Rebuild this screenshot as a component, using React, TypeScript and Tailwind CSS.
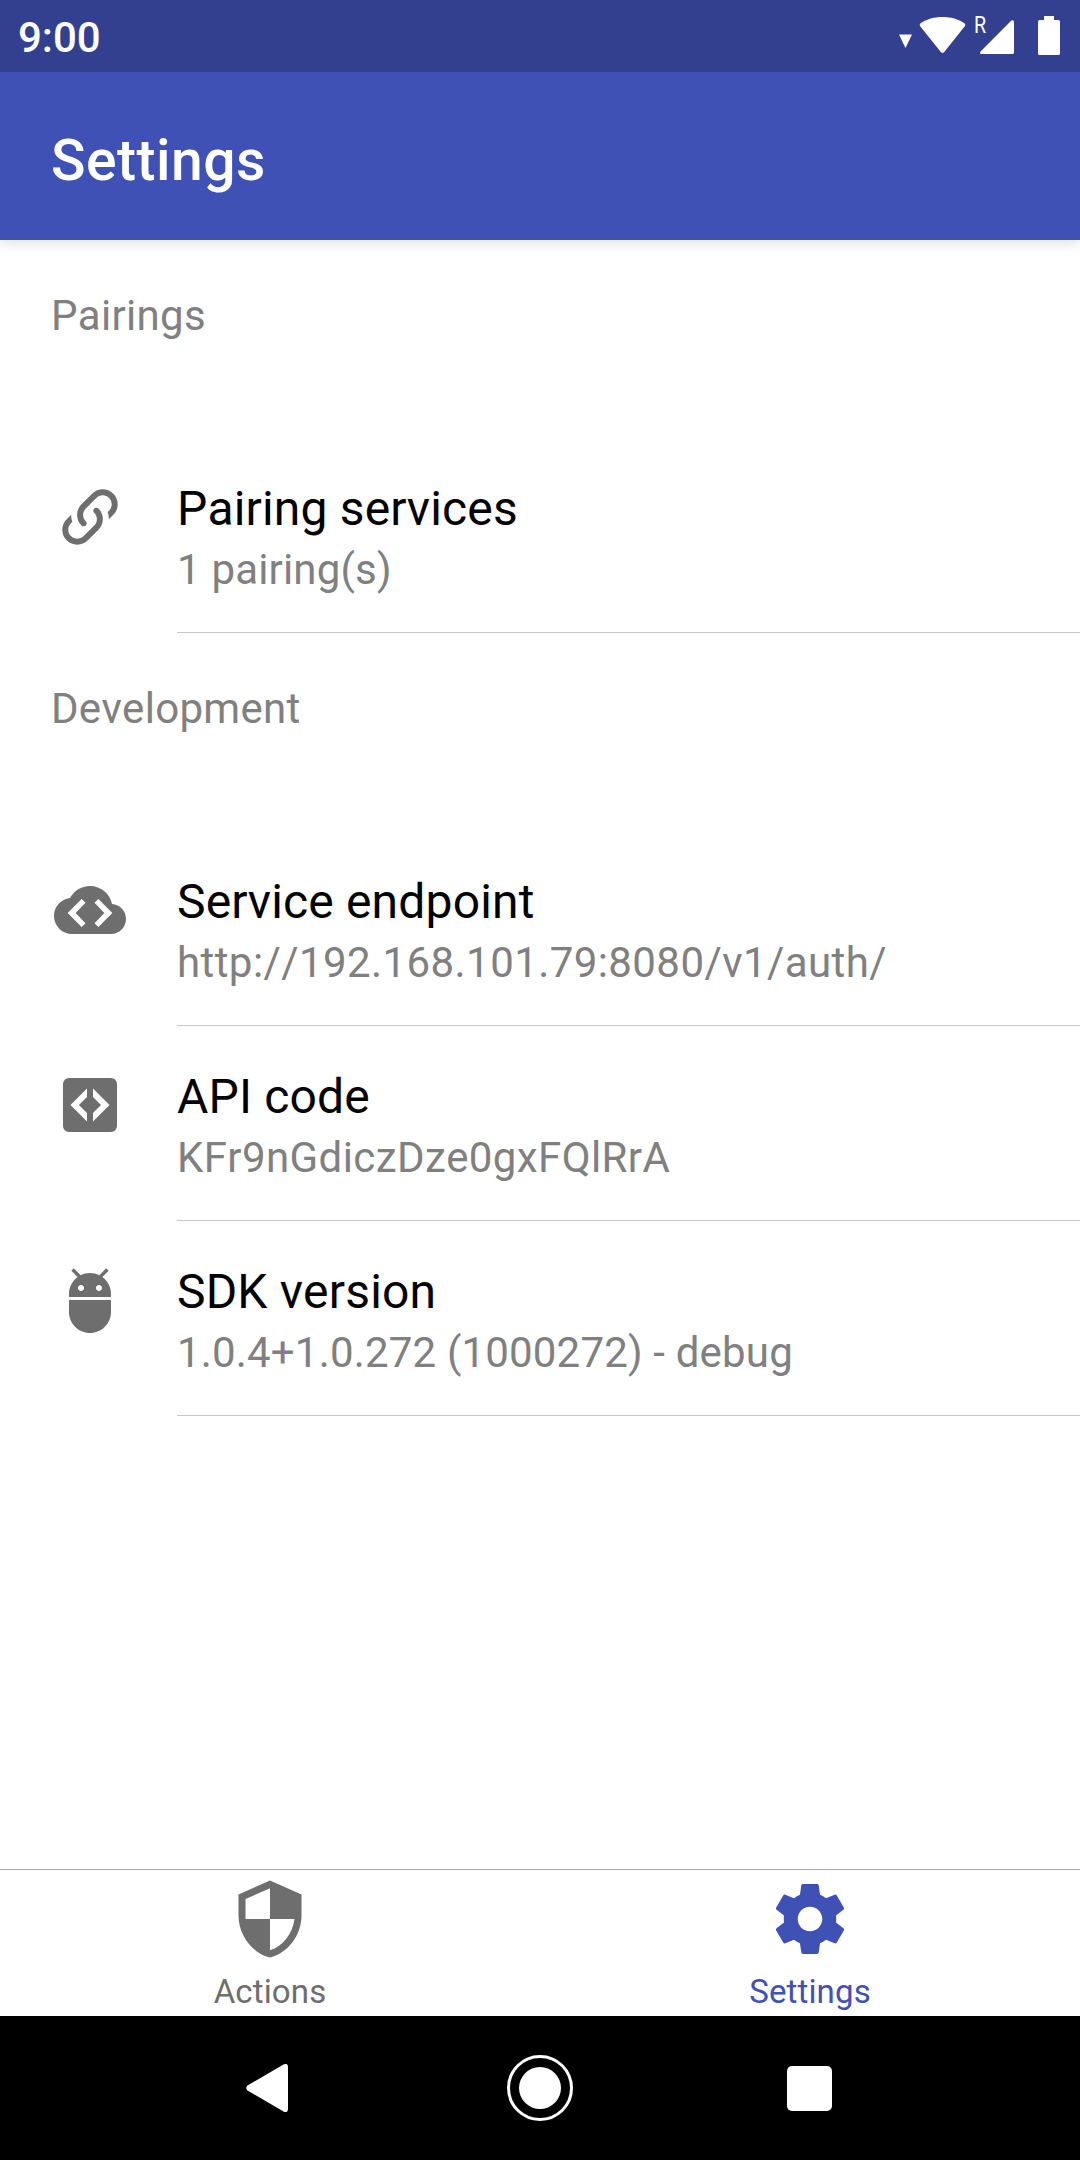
import type { ReactNode } from "react";

const LINK =
  "M10.59,13.41C11,13.8 11,14.44 10.59,14.83C10.2,15.22 9.56,15.22 9.17,14.83C7.22,12.88 7.22,9.71 9.17,7.76V7.76L12.71,4.22C14.66,2.27 17.83,2.27 19.78,4.22C21.73,6.17 21.73,9.34 19.78,11.29L18.29,12.78C18.3,11.96 18.17,11.14 17.89,10.36L18.36,9.88C19.54,8.71 19.54,6.81 18.36,5.64C17.19,4.46 15.29,4.46 14.12,5.64L10.59,9.17C9.41,10.34 9.41,12.24 10.59,13.41M13.41,9.17C13.8,8.78 14.44,8.78 14.83,9.17C16.78,11.12 16.78,14.29 14.83,16.24V16.24L11.29,19.78C9.34,21.73 6.17,21.73 4.22,19.78C2.27,17.83 2.27,14.66 4.22,12.71L5.71,11.22C5.7,12.04 5.83,12.86 6.11,13.65L5.64,14.12C4.46,15.29 4.46,17.19 5.64,18.36C6.81,19.54 8.71,19.54 9.88,18.36L13.41,14.83C14.59,13.66 14.59,11.76 13.41,10.59C13,10.2 13,9.56 13.41,9.17Z";
const CLOUD =
  "M19.35 10.04C18.67 6.59 15.64 4 12 4 9.11 4 6.6 5.64 5.35 8.04 2.34 8.36 0 10.91 0 14c0 3.31 2.69 6 6 6h13c2.76 0 5-2.24 5-5 0-2.64-2.05-4.78-4.65-4.96zM9.2 8.3L4.55 13l4.65 4.7 1.3-1.3L7.2 13l3.3-3.4zM14.8 8.3l-1.3 1.3L16.8 13l-3.3 3.4 1.3 1.3L19.45 13z";
const CODE_BOX =
  "M5 3h14a2 2 0 0 1 2 2v14a2 2 0 0 1-2 2H5a2 2 0 0 1-2-2V5a2 2 0 0 1 2-2zM11 6.5L5.5 12l5.5 5.5v-2.83L8.33 12 11 9.33zM13 6.5v2.83L15.67 12 13 14.67v2.83l5.5-5.5z";
const ANDROID =
  "M5 16c0 3.87 3.13 7 7 7s7-3.13 7-7v-4H5v4zM16.12 4.37l2.1-2.1-.82-.83-2.3 2.31C14.16 3.28 13.12 3 12 3s-2.16.28-3.09.75L6.6 1.44l-.82.83 2.1 2.1C6.14 5.64 5 7.68 5 10v1h14v-1c0-2.32-1.14-4.36-2.88-5.63zM9 9c-.55 0-1-.45-1-1s.45-1 1-1 1 .45 1 1-.45 1-1 1zm6 0c-.55 0-1-.45-1-1s.45-1 1-1 1 .45 1 1-.45 1-1 1z";
const SHIELD =
  "M12 1L3 5v6c0 5.55 3.84 10.74 9 12 5.16-1.26 9-6.45 9-12V5l-9-4zm0 10.99h7c-.53 4.12-3.28 7.79-7 8.94V12H5V6.3l7-3.11v8.8z";
const GEAR =
  "M19.43 12.98c.04-.32.07-.64.07-.98s-.03-.66-.07-.98l2.11-1.65c.19-.15.24-.42.12-.64l-2-3.46c-.12-.22-.39-.3-.61-.22l-2.49 1c-.52-.4-1.08-.73-1.69-.98l-.38-2.65C14.46 2.18 14.25 2 14 2h-4c-.25 0-.46.18-.49.42l-.38 2.65c-.61.25-1.17.59-1.69.98l-2.49-1c-.23-.09-.49 0-.61.22l-2 3.46c-.13.22-.07.49.12.64l2.11 1.65c-.04.32-.07.65-.07.98s.03.66.07.98l-2.11 1.65c-.19.15-.24.42-.12.64l2 3.46c.12.22.39.3.61.22l2.49-1c.52.4 1.08.73 1.69.98l.38 2.65c.03.24.24.42.49.42h4c.25 0 .46-.18.49-.42l.38-2.65c.61-.25 1.17-.59 1.69-.98l2.49 1c.23.09.49 0 .61-.22l2-3.46c.12-.22.07-.49-.12-.64l-2.11-1.65zM12 15.5c-1.93 0-3.5-1.57-3.5-3.5s1.57-3.5 3.5-3.5 3.5 1.57 3.5 3.5-1.57 3.5-3.5 3.5z";

function Icon({ d, className }: { d: string; className: string }) {
  return (
    <svg viewBox="0 0 24 24" fill="currentColor" fillRule="evenodd" className={className}>
      <path d={d} />
    </svg>
  );
}

function StatusBar() {
  return (
    <div className="relative z-10 flex h-[72px] shrink-0 items-start justify-between bg-[#334090] pr-5 pl-[18px] text-white">
      <span className="pt-0.5 text-[42px] leading-[72px] font-medium">9:00</span>
      <div className="flex h-full items-start">
        <svg className="mt-[34px] h-[14px] w-[13px]" viewBox="0 0 13 14" fill="currentColor">
          <path d="M0 .5h13L6.5 14z" />
        </svg>
        <svg className="mt-[17px] ml-[7px] h-9 w-[47px]" viewBox="0 0 47 36" fill="currentColor">
          <path d="M1.6 6.2C7.800 2 15 0 23.500 0S39.200 2 45.400 6.200Q47 7.600 45.800 9.200L25 35.200Q23.500 36.600 22 35.200L1.200 9.200Q0 7.600 1.600 6.200z" />
        </svg>
        <div className="relative mt-5 ml-[14px] h-[34px] w-[34px]">
          <svg className="h-full w-full" viewBox="0 0 34 34" fill="currentColor">
            <path d="M31.400.6Q34-.8 34 2v30.500Q34 34 32.500 34H1.500Q-.8 34 .6 31.600z" />
          </svg>
          <span className="absolute -top-[7px] -left-[6px] origin-left scale-x-[.82] text-[24px] leading-[24px]">R</span>
        </div>
        <svg className="mt-4 ml-6 h-[39px] w-[22px]" viewBox="0 0 22 39" fill="currentColor">
          <path d="M6 0h10v4h4.500Q22 4 22 5.500v32Q22 39 20.500 39h-19Q0 39 0 37.500v-32Q0 4 1.500 4H6z" />
        </svg>
      </div>
    </div>
  );
}

function SectionHeader({ children }: { children: ReactNode }) {
  return (
    <h2 className="h-[198px] pt-[51px] pl-[51px] text-[42px] leading-[49px] tracking-[0.3px] text-[#808080]">
      {children}
    </h2>
  );
}

type RowProps = { icon: string; title: string; detail: string; detailTracking?: string };

function Row({ icon, title, detail, detailTracking = "tracking-[0.18px]" }: RowProps) {
  return (
    <div className="flex h-[195px] pl-[54px]">
      <Icon d={icon} className="mt-[43px] mr-[51px] size-[72px] shrink-0 text-[#6e6e6e]" />
      <div className="flex flex-1 flex-col border-b border-[#c8c8c8] pt-[43px]">
        <span className="text-[48px] leading-[56px] tracking-[0.17px] text-black">{title}</span>
        <span className={`mt-2 text-[42px] leading-[49px] text-[#808080] ${detailTracking}`}>{detail}</span>
      </div>
    </div>
  );
}

function Tab({ icon, label, color }: { icon: string; label: string; color: string }) {
  return (
    <div className={`flex flex-1 flex-col items-center pt-[7px] ${color}`}>
      <Icon d={icon} className="size-[84px]" />
      <span className="mt-[11px] text-[33px] leading-[39px] tracking-[0.15px]">{label}</span>
    </div>
  );
}

function SystemNav() {
  return (
    <div className="flex h-36 shrink-0 items-center justify-between bg-black pr-[248px] pl-[246px] text-white">
      <svg className="h-12 w-[42px]" viewBox="0 0 42 48" fill="currentColor">
        <path d="M37.500.6Q42-1.500 42 3v42q0 4.500-4.500 2.400L1.500 26.500Q-1 24 1.500 21.500z" />
      </svg>
      <div className="ml-1 flex size-[66px] items-center justify-center rounded-full border-3 border-white">
        <div className="size-[42px] rounded-full bg-white" />
      </div>
      <div className="size-[45px] rounded-[5px] bg-white" />
    </div>
  );
}

export default function App() {
  return (
    <div className="flex h-[2160px] w-[1080px] flex-col overflow-hidden bg-white font-[Roboto,sans-serif] [font-kerning:none]">
      <StatusBar />
      <header className="flex h-[168px] shrink-0 items-center bg-[#3f51b5] pt-[9px] pl-[51px] shadow-[0_3px_12px_rgba(0,0,0,0.13)]">
        <h1 className="text-[57px] leading-[70px] font-medium tracking-[0.5px] text-white">Settings</h1>
      </header>
      <main className="flex-1">
        <SectionHeader>Pairings</SectionHeader>
        <Row icon={LINK} title="Pairing services" detail="1 pairing(s)" />
        <SectionHeader>Development</SectionHeader>
        <Row
          icon={CLOUD}
          title="Service endpoint"
          detail="http://192.168.101.79:8080/v1/auth/"
          detailTracking="tracking-[0.42px]"
        />
        <Row icon={CODE_BOX} title="API code" detail="KFr9nGdiczDze0gxFQlRrA" detailTracking="tracking-[0.4px]" />
        <Row icon={ANDROID} title="SDK version" detail="1.0.4+1.0.272 (1000272) - debug" />
      </main>
      <nav className="flex h-[147px] shrink-0 border-t border-[#a7a7aa]">
        <Tab icon={SHIELD} label="Actions" color="text-[#6e6e6e]" />
        <Tab icon={GEAR} label="Settings" color="text-[#3f51b5]" />
      </nav>
      <SystemNav />
    </div>
  );
}
